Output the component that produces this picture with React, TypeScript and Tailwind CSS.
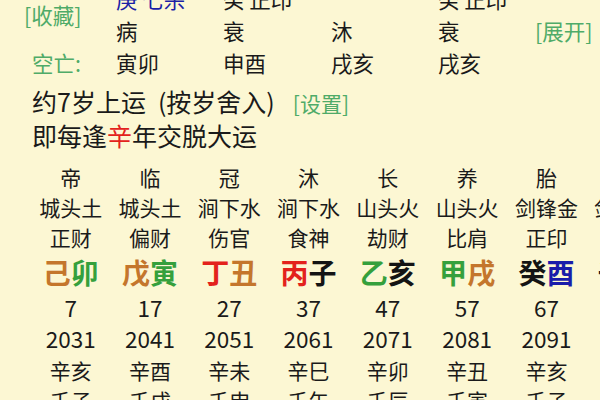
import type { ReactNode } from 'react'

type TColor = 'earth' | 'wood' | 'fire' | 'water' | 'metal'

const COLOR: Record<TColor, string> = {
  earth: 'text-[#c4762c]',
  wood: 'text-[#35a03c]',
  fire: 'text-[#e3221c]',
  water: 'text-[#141414]',
  metal: 'text-[#1a1caa]',
}

type TPillar = {
  phase: string
  nayin: string
  god: string
  stem: [string, TColor]
  branch: [string, TColor]
  age: string
  year: string
  liu: string
  next: string
}

const PILLARS: TPillar[] = [
  { phase: '帝', nayin: '城头土', god: '正财', stem: ['己', 'earth'], branch: ['卯', 'wood'], age: '7', year: '2031', liu: '辛亥', next: '壬子' },
  { phase: '临', nayin: '城头土', god: '偏财', stem: ['戊', 'earth'], branch: ['寅', 'wood'], age: '17', year: '2041', liu: '辛酉', next: '壬戌' },
  { phase: '冠', nayin: '涧下水', god: '伤官', stem: ['丁', 'fire'], branch: ['丑', 'earth'], age: '27', year: '2051', liu: '辛未', next: '壬申' },
  { phase: '沐', nayin: '涧下水', god: '食神', stem: ['丙', 'fire'], branch: ['子', 'water'], age: '37', year: '2061', liu: '辛巳', next: '壬午' },
  { phase: '长', nayin: '山头火', god: '劫财', stem: ['乙', 'wood'], branch: ['亥', 'water'], age: '47', year: '2071', liu: '辛卯', next: '壬辰' },
  { phase: '养', nayin: '山头火', god: '比肩', stem: ['甲', 'wood'], branch: ['戌', 'earth'], age: '57', year: '2081', liu: '辛丑', next: '壬寅' },
  { phase: '胎', nayin: '剑锋金', god: '正印', stem: ['癸', 'water'], branch: ['酉', 'metal'], age: '67', year: '2091', liu: '辛亥', next: '壬子' },
  { phase: '绝', nayin: '剑锋金', god: '劫财', stem: ['壬', 'water'], branch: ['申', 'metal'], age: '77', year: '2101', liu: '辛酉', next: '壬戌' },
]

const Cell = ({ children, className = '' }: { children?: ReactNode; className?: string }) => (
  <div className={`whitespace-nowrap ${className}`}>{children}</div>
)

const App = () => {
  return (
    <main className="h-[400px] w-[600px] overflow-hidden bg-[#fcf7d3] text-[#1a1a1a] [font-family:'Noto_Sans_CJK_SC','Noto_Sans',sans-serif]">
      <div className="-mt-[17px]">
        {/* 上半部分 */}
        <div className="grid grid-cols-[116px_107px_108px_107px_97px_1fr] grid-rows-[32px_32px_32px] text-[21.5px] leading-[32px]">
          <Cell className="row-span-2 flex items-center pl-[24px] text-[#4fab68]">[收藏]</Cell>
          <Cell className="text-[#1b1fa6]">庚 七杀</Cell>
          <Cell>癸 正印</Cell>
          <Cell />
          <Cell>癸 正印</Cell>
          <Cell />
          <Cell>病</Cell>
          <Cell>衰</Cell>
          <Cell>沐</Cell>
          <Cell>衰</Cell>
          <Cell className="text-[#4fab68]">[展开]</Cell>
          <Cell className="pl-[32px] text-[#4fab68]">空亡:</Cell>
          <Cell>寅卯</Cell>
          <Cell>申酉</Cell>
          <Cell>戌亥</Cell>
          <Cell>戌亥</Cell>
          <Cell />
        </div>

        {/* 起运 */}
        <div className="mt-[6px] pl-[32px] text-[25px] leading-[32px]">
          <div className="whitespace-nowrap">
            约7岁上运<span className="ml-[12px]">(按岁舍入)</span>
            <span className="ml-[18px] text-[21px] text-[#4fab68]">[设置]</span>
          </div>
          <div className="whitespace-nowrap">
            即每逢<span className="text-[#e3221c]">辛</span>年交脱大运
          </div>
        </div>

        {/* 大运表 */}
        <div className="mt-[11px] grid grid-cols-[repeat(8,79.3px)] pl-[31px] text-center">
          {PILLARS.map((p) => (
            <div key={p.age} className="flex flex-col items-center">
              <Cell className="h-[30px] text-[21px] leading-[30px]">{p.phase}</Cell>
              <Cell className="h-[30px] text-[21px] leading-[30px]">{p.nayin}</Cell>
              <Cell className="h-[30px] text-[21px] leading-[30px]">{p.god}</Cell>
              <Cell className="h-[40px] text-[28px] font-bold leading-[40px]">
                <span className={COLOR[p.stem[1]]}>{p.stem[0]}</span>
                <span className={COLOR[p.branch[1]]}>{p.branch[0]}</span>
              </Cell>
              <Cell className="h-[30px] text-[22.5px] leading-[30px]">{p.age}</Cell>
              <Cell className="h-[32px] text-[22.5px] leading-[32px]">{p.year}</Cell>
              <Cell className="h-[32px] text-[21px] leading-[32px]">{p.liu}</Cell>
              <Cell className="h-[28px] text-[21px] leading-[28px]">{p.next}</Cell>
            </div>
          ))}
        </div>
      </div>
    </main>
  )
}

export default App
